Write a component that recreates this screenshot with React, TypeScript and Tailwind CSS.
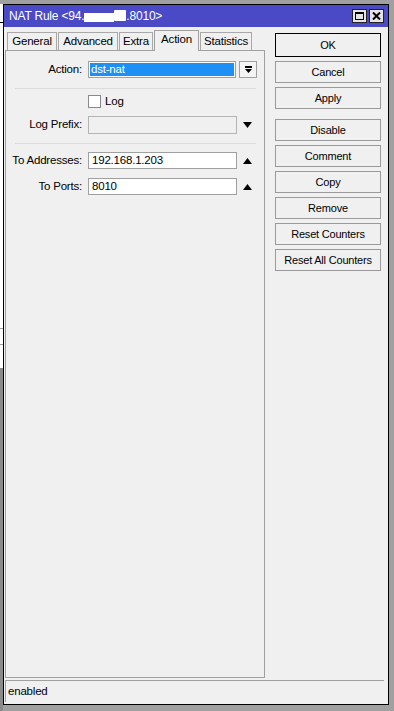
import React from "react";

const font = { fontFamily: '"Liberation Sans", Arial, sans-serif' };

const tabs = ["General", "Advanced", "Extra", "Action", "Statistics"];
const tabWidths: Record<string, string> = {
  General: "w-[50px]",
  Advanced: "w-[60px]",
  Extra: "w-[34px]",
  Action: "w-[45px]",
  Statistics: "w-[52px]",
};

const buttons = [
  ["OK", "Cancel", "Apply"],
  ["Disable", "Comment", "Copy", "Remove", "Reset Counters", "Reset All Counters"],
];

const TriDown = () => (
  <svg width="9" height="6" viewBox="0 0 9 6">
    <path d="M0 0h9L4.5 6z" fill="#000" />
  </svg>
);

const TriUp = () => (
  <svg width="9" height="6" viewBox="0 0 9 6">
    <path d="M0 6h9L4.5 0z" fill="#000" />
  </svg>
);

const Row = ({ label, children }: { label: string; children: React.ReactNode }) => (
  <div className="flex items-center h-[17px]">
    <div className="w-[76px] text-right text-[11.5px] tracking-[-0.2px] text-black leading-none">{label}</div>
    <div className="ml-[6px] flex items-center">{children}</div>
  </div>
);

const App: React.FC = () => {
  return (
    <div className="w-[394px] h-[711px] bg-[#a0a0a0] flex overflow-hidden" style={font}>
      {/* bit of the window behind */}
      <div className="w-[3px] flex flex-col">
        <div className="h-[4px]" />
        <div className="h-[364px] bg-white flex flex-col">
          <div className="h-[18px]" />
          <div className="h-px bg-black" />
          <div className="h-[305px]" />
          <div className="h-px bg-[#a0a0a0]" />
          <div className="h-[15px]" />
          <div className="h-px bg-[#a0a0a0]" />
        </div>
        <div className="flex-1 bg-[#8a8a8a]" />
      </div>

      <div className="mt-[4px] w-[386px] h-[701px] border border-black bg-[#f0f0f0] flex flex-col">
        {/* title bar */}
        <div className="h-[22px] bg-[#4a4ac6] flex items-center pl-[5px] pr-[4px]">
          <div className="flex items-center text-white text-[12px] tracking-[-0.2px] leading-none whitespace-nowrap">
            <span>NAT Rule &lt;94.</span>
            {/* redacted part */}
            <div className="w-[42px] h-[12px] flex items-end">
              <div className="w-[30px] h-[9px] bg-white" />
              <div className="w-[12px] h-[11px] mb-[1px] bg-white rounded-[1px]" />
            </div>
            <span>.8010&gt;</span>
          </div>
          <div className="ml-auto flex gap-[2px]">
            <div className="w-[15px] h-[14px] bg-[#e4e4e4] border border-[#222] flex items-center justify-center">
              <div className="w-[9px] h-[8px] border border-black border-t-2" />
            </div>
            <div className="w-[15px] h-[14px] bg-[#e4e4e4] border border-[#222] flex items-center justify-center">
              <svg width="9" height="8" viewBox="0 0 9 8">
                <path d="M1 0.5l7 7M8 0.5l-7 7" stroke="#000" strokeWidth="2" />
              </svg>
            </div>
          </div>
        </div>

        {/* body */}
        <div className="flex-1 flex flex-col">
          <div className="flex-1 flex pt-[3px]">
            <div className="ml-[1px] w-[260px] flex flex-col">
              <div className="h-[20px] flex items-end gap-px pl-[2px] relative z-10">
                {tabs.map((t) =>
                  t === "Action" ? (
                    <div
                      key={t}
                      className={`${tabWidths[t]} h-[21px] -mb-px bg-[#f0f0f0] border border-b-0 border-[#a0a0a0] text-[11.5px] tracking-[-0.2px] text-black flex items-center justify-center pb-[2px]`}
                    >
                      {t}
                    </div>
                  ) : (
                    <div
                      key={t}
                      className={`${tabWidths[t]} h-[18px] bg-[#f0f0f0] border border-[#a8a8a8] border-b-0 text-[11.5px] tracking-[-0.2px] text-black flex items-center justify-center`}
                    >
                      {t}
                    </div>
                  )
                )}
              </div>
              <div className="flex-1 border border-[#a0a0a0] pt-[10px]">
                <Row label="Action:">
                  <div className="w-[148px] h-[17px] border border-[#a0a0a0] bg-white p-px">
                    <div className="h-full bg-[#1e8ff5] text-white text-[11.5px] tracking-[-0.2px] leading-[13px] pl-[1px]">dst-nat</div>
                  </div>
                  <div className="ml-[3px] w-[18px] h-[17px] border border-[#a0a0a0] bg-[#f4f4f4] flex flex-col items-center justify-center gap-px">
                    <div className="w-[7px] h-[2px] bg-black" />
                    <svg width="7" height="4" viewBox="0 0 7 4">
                      <path d="M0 0h7L3.5 4z" fill="#000" />
                    </svg>
                  </div>
                </Row>
                <div className="mt-[10px] ml-[9px] w-[241px] h-px bg-[#dcdcdc]" />
                <div className="mt-[6px] flex items-center h-[13px]">
                  <div className="ml-[82px] w-[13px] h-[13px] border border-[#8a8a8a] bg-white" />
                  <span className="ml-[4px] text-[11.5px] tracking-[-0.2px] text-black leading-none">Log</span>
                </div>
                <div className="mt-[8px]">
                  <Row label="Log Prefix:">
                    <div className="w-[149px] h-[18px] border border-[#b4b4b4] bg-[#f0f0f0]" />
                    <div className="ml-[4px] w-[12px] flex justify-center">
                      <TriDown />
                    </div>
                  </Row>
                </div>
                <div className="mt-[10px] ml-[9px] w-[241px] h-px bg-[#dcdcdc]" />
                <div className="mt-[8px]">
                  <Row label="To Addresses:">
                    <div className="w-[149px] h-[17px] border border-[#a0a0a0] bg-white text-[11.5px] tracking-[-0.2px] text-black leading-[15px] pl-[3px]">192.168.1.203</div>
                    <div className="ml-[4px] w-[12px] flex justify-center">
                      <TriUp />
                    </div>
                  </Row>
                </div>
                <div className="mt-[9px]">
                  <Row label="To Ports:">
                    <div className="w-[149px] h-[17px] border border-[#a0a0a0] bg-white text-[11.5px] tracking-[-0.2px] text-black leading-[15px] pl-[3px]">8010</div>
                    <div className="ml-[4px] w-[12px] flex justify-center">
                      <TriUp />
                    </div>
                  </Row>
                </div>
              </div>
            </div>

            <div className="ml-[10px] w-[106px] pt-[3px] flex flex-col">
              {buttons.map((grp, gi) => (
                <div key={gi} className={`flex flex-col gap-[4px] ${gi === 1 ? "mt-[10px]" : ""}`}>
                  {grp.map((b) => (
                    <div
                      key={b}
                      className={`bg-[#f0f0f0] border ${b === "OK" ? "h-[24px] border-black" : "h-[22px] border-[#9a9a9a]"} text-[11px] tracking-[-0.2px] text-black flex items-center justify-center`}
                    >
                      {b}
                    </div>
                  ))}
                </div>
              ))}
            </div>
          </div>

          {/* status bar */}
          <div className="mt-[2px] mb-[2px] ml-[1px] mr-[4px] h-[22px] border-t border-l border-[#a0a0a0] flex items-center pl-[2px] text-[11.5px] tracking-[-0.2px] text-black">
            enabled
          </div>
        </div>
      </div>
    </div>
  );
};

export default App;
